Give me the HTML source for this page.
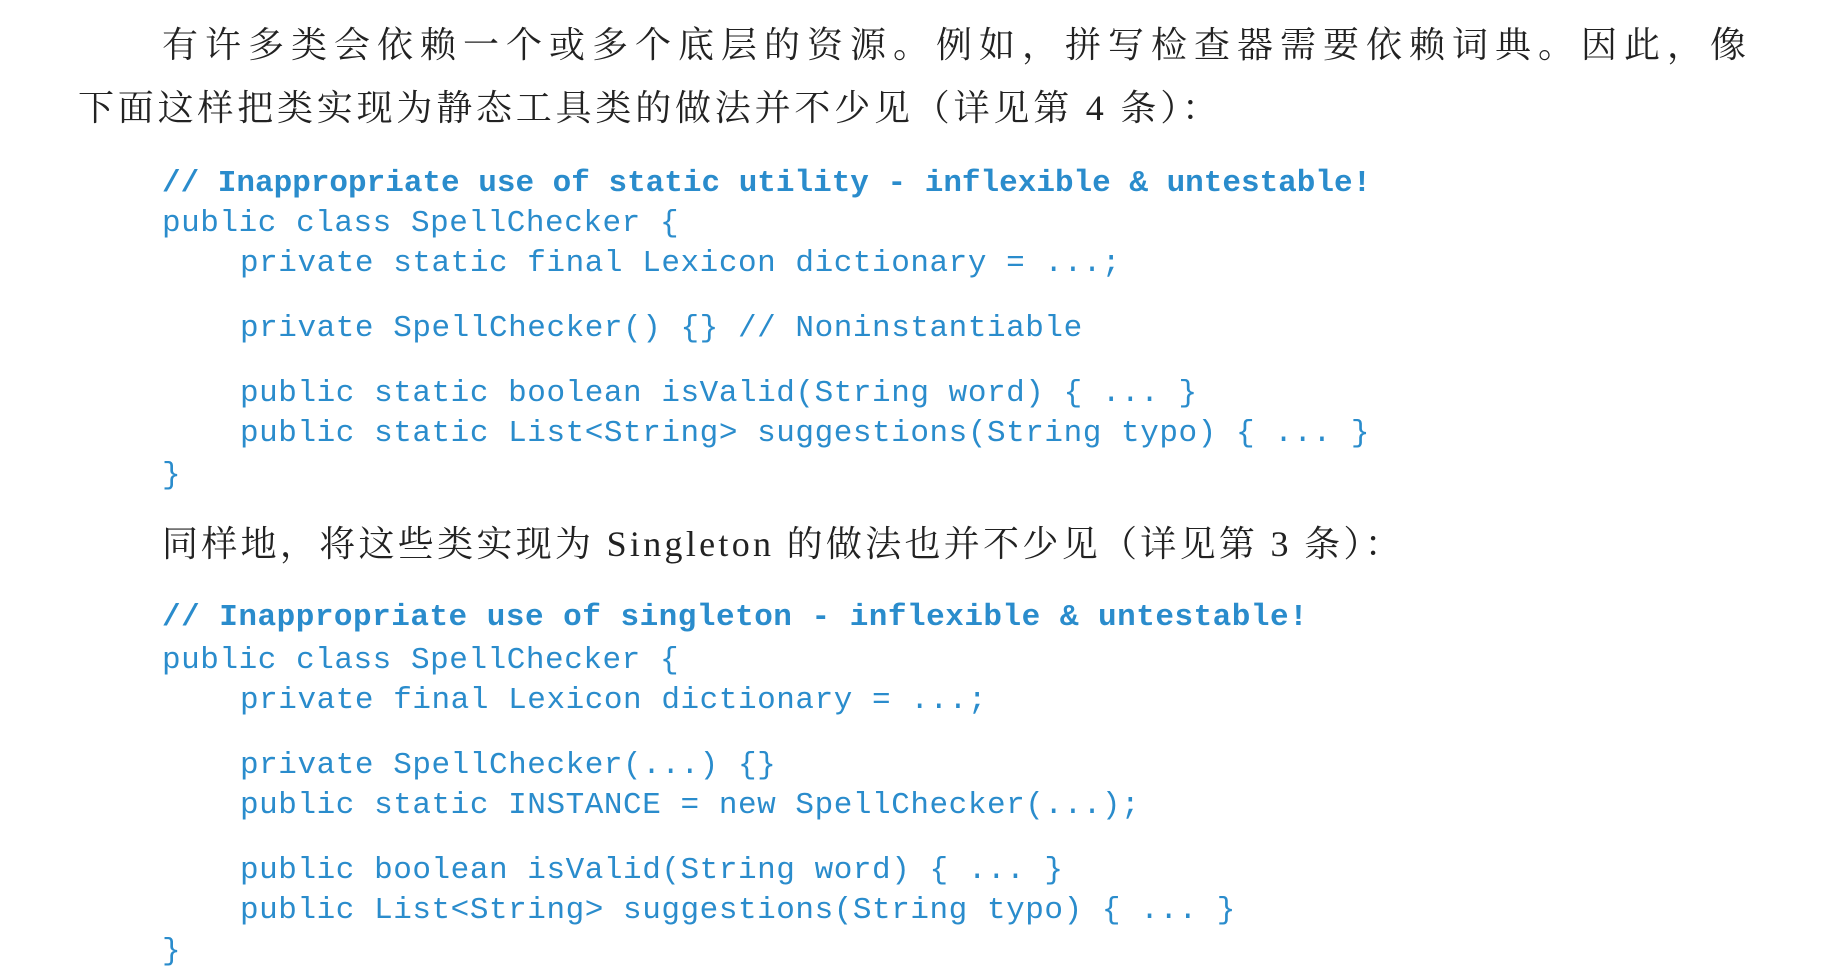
<!DOCTYPE html>
<html><head><meta charset="utf-8"><style>
body{margin:0;width:1827px;height:978px;background:#fff;position:relative;overflow:hidden}
.t{position:absolute;font-family:"Liberation Serif","Noto Serif CJK SC",serif;font-size:36px;color:#222;white-space:nowrap;line-height:44px}
.c{position:absolute;font-family:"Liberation Mono",monospace;font-size:31px;letter-spacing:0.55px;color:#2a8ccc;white-space:pre;line-height:40px}
.b{font-weight:bold;letter-spacing:0.2px}
</style></head><body>
<div class="t" style="left:162px;top:23px;width:1561px;text-align-last:justify;text-align:justify;letter-spacing:7px">有许多类会依赖一个或多个底层的资源。例如，拼写检查器需要依赖词典。因此，像</div>
<div class="t" style="left:78px;top:86px;letter-spacing:3.8px">下面这样把类实现为静态工具类的做法并不少见（详见第 4 条）：</div>
<div class="c b" style="left:162px;top:164px;letter-spacing:0">// Inappropriate use of static utility - inflexible &amp; untestable!</div>
<div class="c" style="left:162px;top:204px">public class SpellChecker {</div>
<div class="c" style="left:240px;top:244px">private static final Lexicon dictionary = ...;</div>
<div class="c" style="left:240px;top:309px">private SpellChecker() {} // Noninstantiable</div>
<div class="c" style="left:240px;top:374px">public static boolean isValid(String word) { ... }</div>
<div class="c" style="left:240px;top:414px">public static List&lt;String&gt; suggestions(String typo) { ... }</div>
<div class="c" style="left:162px;top:456px">}</div>
<div class="t" style="left:162px;top:522px;letter-spacing:3.3px">同样地，将这些类实现为 Singleton 的做法也并不少见（详见第 3 条）：</div>
<div class="c b" style="left:162px;top:598px;letter-spacing:0.5px">// Inappropriate use of singleton - inflexible &amp; untestable!</div>
<div class="c" style="left:162px;top:641px">public class SpellChecker {</div>
<div class="c" style="left:240px;top:681px">private final Lexicon dictionary = ...;</div>
<div class="c" style="left:240px;top:746px">private SpellChecker(...) {}</div>
<div class="c" style="left:240px;top:786px">public static INSTANCE = new SpellChecker(...);</div>
<div class="c" style="left:240px;top:851px">public boolean isValid(String word) { ... }</div>
<div class="c" style="left:240px;top:891px">public List&lt;String&gt; suggestions(String typo) { ... }</div>
<div class="c" style="left:162px;top:932px">}</div>
</body></html>
